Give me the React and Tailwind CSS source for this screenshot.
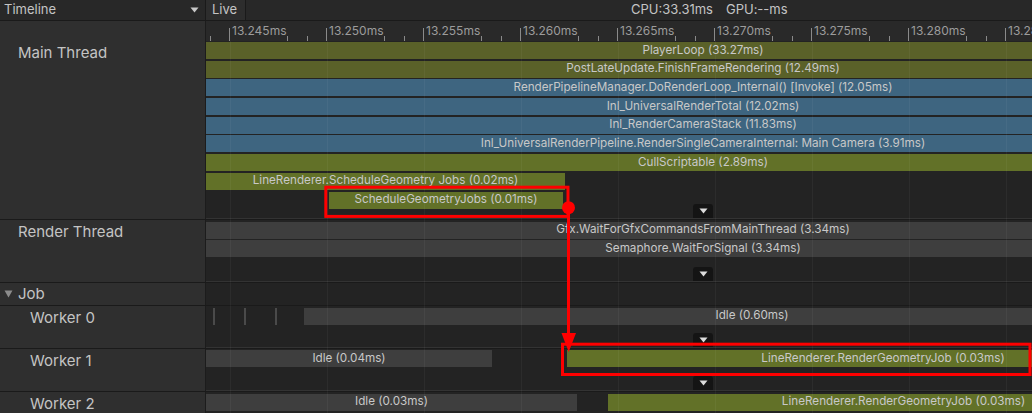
import React from "react";

const OLIVE = "bg-[#5a6129]";
const GREEN = "bg-[#627128]";
const BLUE = "bg-[#3e6580]";
const GRAY = "bg-[#3e3e3e]";

function Bar({ cls, children }) {
  return (
    <div
      className={`h-[17px] shrink-0 flex items-center justify-center overflow-hidden whitespace-nowrap text-[11.7px] leading-none text-[#c8c8c8] ${cls}`}
    >
      {children}
    </div>
  );
}

function Toggle() {
  return (
    <div className="absolute bottom-0 left-1/2 -translate-x-1/2 w-[20px] h-[14px] rounded-t-[3px] bg-[#141414] flex items-center justify-center">
      <svg width="9" height="6" viewBox="0 0 9 6">
        <path d="M0.5 0.5 H8.5 L4.5 5.5 Z" fill="#dcdcdc" />
      </svg>
    </div>
  );
}

function LeftCell({ children, cls = "" }) {
  return (
    <div className={`w-[206px] shrink-0 bg-[#2f2f2f] border-r border-[#1c1c1c] text-[15px] leading-[18px] text-[#c4c4c4] ${cls}`}>
      {children}
    </div>
  );
}

const ticks = [0, 1, 2, 3, 4, 5, 6, 7, 8];
const labels = ["13.245ms", "13.250ms", "13.255ms", "13.260ms", "13.265ms", "13.270ms", "13.275ms", "13.280ms", "13.285ms"];

export default function App() {
  return (
    <div className="relative w-[1032px] h-[413px] overflow-hidden bg-[#232323] font-[Inter,'Noto_Sans',sans-serif]">
      <div className="w-[1200px] flex flex-col">
        {/* Header */}
        <div className="flex h-[21px] bg-[#282828] border-b border-[#1a1a1a]">
          <div className="w-[206px] shrink-0 flex items-center justify-between pl-[4px] pr-[6px] border-r border-[#1a1a1a] text-[13px] text-[#c4c4c4]">
            <span>Timeline</span>
            <svg width="9" height="6" viewBox="0 0 9 6">
              <path d="M0.5 0.5 H8.5 L4.5 5.5 Z" fill="#c8c8c8" />
            </svg>
          </div>
          <div className="w-[40px] shrink-0 flex items-center pl-[6px] bg-[#2d2d2d] border-r border-[#1a1a1a] text-[13px] text-[#c4c4c4]">
            Live
          </div>
          <div className="flex-1 flex items-center pl-[385px] text-[13px] text-[#c4c4c4] whitespace-nowrap">
            <span>CPU:33.31ms</span>
            <span className="ml-[13px]">GPU:--ms</span>
          </div>
        </div>

        {/* Ruler */}
        <div className="flex h-[20px]">
          <LeftCell />
          <div className="relative flex-1 bg-[#292929]">
            <svg className="absolute inset-0" width="993" height="20">
              {ticks.map((k) => {
                const x = 23.5 + 97 * k;
                return (
                  <g key={k} stroke="#8a8a8a" strokeWidth="1">
                    <line x1={x} y1="7" x2={x} y2="20" />
                    <line x1={x + 58} y1="15" x2={x + 58} y2="20" />
                    <line x1={x + 78} y1="15" x2={x + 78} y2="20" />
                  </g>
                );
              })}
              <line x1={23.5 - 19} y1="15" x2={23.5 - 19} y2="20" stroke="#8a8a8a" />
            </svg>
            {labels.map((l, k) => (
              <span
                key={l}
                className="absolute top-[3px] text-[12px] leading-[14px] text-[#9c9c9c]"
                style={{ left: 26 + 97 * k }}
              >
                {l}
              </span>
            ))}
          </div>
        </div>

        {/* Main Thread */}
        <div className="flex h-[179px] border-b border-[#1a1a1a]">
          <LeftCell cls="pl-[18px] pt-[3px]">Main Thread</LeftCell>
          <div className="flex-1 flex flex-col">
            <div className="relative flex-1 flex flex-col gap-[1.7px] pt-[1px]">
              <Bar cls={OLIVE}>PlayerLoop (33.27ms)</Bar>
              <Bar cls={OLIVE}>PostLateUpdate.FinishFrameRendering (12.49ms)</Bar>
              <Bar cls={BLUE}>RenderPipelineManager.DoRenderLoop_Internal() [Invoke] (12.05ms)</Bar>
              <Bar cls={BLUE}>Inl_UniversalRenderTotal (12.02ms)</Bar>
              <Bar cls={BLUE}>Inl_RenderCameraStack (11.83ms)</Bar>
              <Bar cls={BLUE}>Inl_UniversalRenderPipeline.RenderSingleCameraInternal: Main Camera (3.91ms)</Bar>
              <Bar cls={GREEN}>CullScriptable (2.89ms)</Bar>
              <Bar cls={`${GREEN} w-[359px]`}>LineRenderer.ScheduleGeometry Jobs (0.02ms)</Bar>
              <Bar cls={`${GREEN} w-[234px] ml-[123px]`}>ScheduleGeometryJobs (0.01ms)</Bar>
              <Toggle />
            </div>
            <div className="h-px bg-[#333333]" />
          </div>
        </div>

        {/* Render Thread */}
        <div className="flex h-[63px] border-b border-[#1a1a1a]">
          <LeftCell cls="pl-[18px] pt-[3px]">Render Thread</LeftCell>
          <div className="flex-1 flex flex-col">
            <div className="relative flex-1 flex flex-col gap-[1.7px] pt-[1.5px]">
              <Bar cls={GRAY}>Gfx.WaitForGfxCommandsFromMainThread (3.34ms)</Bar>
              <Bar cls={GRAY}>Semaphore.WaitForSignal (3.34ms)</Bar>
              <Toggle />
            </div>
            <div className="h-px bg-[#333333]" />
          </div>
        </div>

        {/* Job header */}
        <div className="flex h-[23px] border-b border-[#1a1a1a]">
          <LeftCell cls="flex items-center pl-[4px]">
            <svg width="9" height="8" viewBox="0 0 9 8" className="mr-[5px]">
              <path d="M0.5 0.5 H8.5 L4.5 7.5 Z" fill="#8c8c8c" />
            </svg>
            <span>Job</span>
          </LeftCell>
          <div className="flex-1" />
        </div>

        {/* Worker 0 */}
        <div className="flex h-[43px] border-b border-[#1a1a1a]">
          <LeftCell cls="pl-[30px] pt-[3px]">Worker 0</LeftCell>
          <div className="flex-1 flex flex-col">
            <div className="relative flex-1 flex pt-[1.5px]">
              <div className="flex items-start w-full">
                <div className="ml-[7px] w-[2px] h-[17px] bg-[#4a4a4a]" />
                <div className="ml-[29px] w-[2px] h-[17px] bg-[#4a4a4a]" />
                <div className="ml-[29px] w-[2px] h-[17px] bg-[#4a4a4a]" />
                <Bar cls={`${GRAY} ml-[27px] flex-1`}>Idle (0.60ms)</Bar>
              </div>
              <Toggle />
            </div>
            <div className="h-px bg-[#333333]" />
          </div>
        </div>

        {/* Worker 1 */}
        <div className="flex h-[43px] border-b border-[#1a1a1a]">
          <LeftCell cls="pl-[30px] pt-[3px]">Worker 1</LeftCell>
          <div className="flex-1 flex flex-col">
            <div className="relative flex-1 flex pt-[1px]">
              <div className="flex items-start w-full">
                <Bar cls={`${GRAY} w-[286px]`}>Idle (0.04ms)</Bar>
                <Bar cls={`${GREEN} ml-[75px] w-[632px]`}>LineRenderer.RenderGeometryJob (0.03ms)</Bar>
              </div>
              <Toggle />
            </div>
            <div className="h-px bg-[#333333]" />
          </div>
        </div>

        {/* Worker 2 */}
        <div className="flex h-[43px]">
          <LeftCell cls="pl-[30px] pt-[3px]">Worker 2</LeftCell>
          <div className="flex-1 flex pt-[1.5px]">
            <div className="flex items-start w-full">
              <Bar cls={`${GRAY} w-[371px]`}>Idle (0.03ms)</Bar>
              <Bar cls={`${GREEN} ml-[31px] w-[591px]`}>LineRenderer.RenderGeometryJob (0.03ms)</Bar>
            </div>
          </div>
        </div>
      </div>

      {/* faint grid lines over timeline */}
      <svg className="absolute left-[207px] top-[41px] pointer-events-none" width="825" height="372">
        {ticks.map((k) => (
          <line key={k} x1={23.5 + 97 * k} y1="0" x2={23.5 + 97 * k} y2="372" stroke="#ffffff" strokeOpacity="0.045" />
        ))}
      </svg>

      {/* red annotations */}
      <svg className="absolute inset-0 pointer-events-none" width="1032" height="413">
        <rect x="325.8" y="187.2" width="242.2" height="29.2" fill="none" stroke="#ff0000" strokeWidth="3" />
        <line x1="568.5" y1="207" x2="568.5" y2="336" stroke="#ff0000" strokeWidth="3" />
        <circle cx="568.5" cy="207.7" r="6.5" fill="#ff0000" />
        <path d="M561.5 333 L576 333 L568.7 352 Z" fill="#ff0000" />
        <rect x="562.5" y="344.2" width="467.5" height="30.3" fill="none" stroke="#ff0000" strokeWidth="3" />
      </svg>
    </div>
  );
}
